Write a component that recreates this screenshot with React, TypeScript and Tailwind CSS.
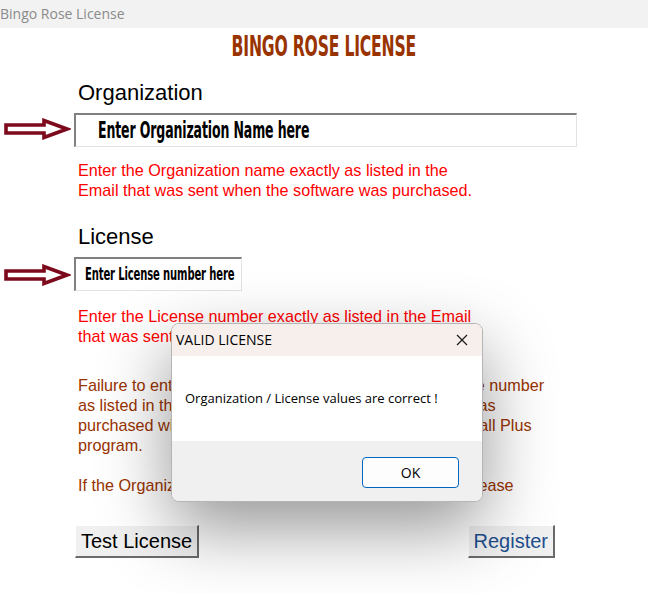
import React from "react";

function Arrow() {
  return (
    <svg width="68" height="22" viewBox="0 0 68 22" className="block">
      <polygon
        points="3,7 41,7 41,2.5 64,11 41,19.5 41,15 3,15"
        fill="#ffffff"
        stroke="#7d0a1c"
        strokeWidth="3.6"
        strokeLinejoin="miter"
      />
    </svg>
  );
}

export default function App() {
  return (
    <div className="relative w-[648px] h-[594px] overflow-hidden bg-white font-['Liberation_Sans',Arial,sans-serif]">
      {/* window title bar */}
      <div className="h-[28px] bg-[#f2f2f2] flex items-center">
        <span className="font-['Open_Sans','Noto_Sans',sans-serif] text-[14px] text-[#8a8a8a] leading-none">
          Bingo Rose License
        </span>
      </div>

      {/* heading */}
      <div className="flex justify-center pt-[4px] h-[52px]">
        <span className="inline-block whitespace-nowrap font-['DejaVu_Sans_Condensed','DejaVu_Sans',sans-serif] font-bold text-[28px] leading-[29px] text-[#993300] scale-x-[0.62] tracking-[-0.3px]">
          BINGO ROSE LICENSE
        </span>
      </div>

      <div className="pl-[78px]">
        <div className="text-[22px] leading-[25px] text-black">Organization</div>
        <div className="relative mt-[8px] -ml-[4px] w-[503px] h-[34px] border-t-2 border-l-2 border-t-[#808080] border-l-[#808080] border-b border-r border-b-[#e3e3e3] border-r-[#e3e3e3] flex items-center pl-[22px]">
          <span className="inline-block origin-left whitespace-nowrap font-['DejaVu_Sans_Condensed','DejaVu_Sans',sans-serif] font-bold text-[23px] text-black scale-x-[0.605] tracking-[-0.2px]">
            Enter Organization Name here
          </span>
          <div className="absolute left-[-73px] top-[3px]">
            <Arrow />
          </div>
        </div>
        <div className="mt-[13px] text-[16.2px] leading-[20px] text-[#ff0000]">
          Enter the Organization name exactly as listed in the
          <br />
          Email that was sent when the software was purchased.
        </div>

        <div className="mt-[24px] text-[22px] leading-[25px] text-black">License</div>
        <div className="relative mt-[8px] -ml-[4px] w-[168px] h-[34px] border-t-2 border-l-2 border-t-[#808080] border-l-[#808080] border-b border-r border-b-[#e3e3e3] border-r-[#e3e3e3] flex items-center pl-[9px]">
          <span className="inline-block origin-left whitespace-nowrap font-['DejaVu_Sans_Condensed','DejaVu_Sans',sans-serif] font-bold text-[17px] text-black scale-x-[0.655] tracking-[-0.2px]">
            Enter License number here
          </span>
          <div className="absolute left-[-73px] top-[5px]">
            <Arrow />
          </div>
        </div>
        <div className="mt-[15px] text-[16.2px] leading-[20px] text-[#ff0000]">
          Enter the License number exactly as listed in the Email
          <br />
          that was sent when the software was purchased.
        </div>

        <div className="mt-[29px] h-[123px] overflow-hidden text-[16.2px] leading-[20px] text-[#993300] whitespace-nowrap">
          Failure to enter the valid Organization name and License number
          <br />
          as listed in the Email that was sent when the software was
          <br />
          purchased will result in the inability to utilize the Bingo Ball Plus
          <br />
          program.
          <br />
          <br />
          If the Organization name or License number was lost, please
          <br />
          contact the vendor for a copy of the Email.
        </div>

        <div className="mt-[27px] flex justify-between w-[480px] -ml-[3px]">
          <button className="h-[33px] px-[5px] bg-[#f0f0f0] border-t border-l border-t-[#ffffff] border-l-[#ffffff] border-b-2 border-r-2 border-b-[#6b6b6b] border-r-[#6b6b6b] text-[20px] leading-none text-black">
            Test License
          </button>
          <button className="h-[33px] px-[5px] bg-[#f0f0f0] border-t border-l border-t-[#ffffff] border-l-[#ffffff] border-b-2 border-r-2 border-b-[#6b6b6b] border-r-[#6b6b6b] text-[20px] leading-none text-[#1e4f8f]">
            Register
          </button>
        </div>
      </div>

      {/* dialog */}
      <div className="absolute left-[171px] top-[323px] w-[312px] h-[179px] rounded-[8px] border border-[#b5b5b5] overflow-hidden shadow-[0_26px_70px_rgba(0,0,0,0.42)] bg-white flex flex-col font-['Open_Sans','Noto_Sans',sans-serif]">
        <div className="h-[32px] bg-[#f7efec] flex items-center justify-between pl-[4px] pr-[14px]">
          <span className="text-[14px] text-black leading-none">VALID LICENSE</span>
          <svg width="12" height="12" viewBox="0 0 12 12">
            <path d="M1 1L11 11M11 1L1 11" stroke="#1a1a1a" strokeWidth="1.2" />
          </svg>
        </div>
        <div className="h-[85px] bg-white flex items-center pl-[13px]">
          <span className="text-[13px] text-black leading-none">
            Organization / License values are correct !
          </span>
        </div>
        <div className="flex-1 bg-[#f0f0f0] flex items-start justify-end pr-[23px] pt-[16px]">
          <button className="w-[97px] h-[31px] rounded-[4px] border border-[#0067c0] bg-[#fdfdfd] text-[14px] text-black leading-none">
            OK
          </button>
        </div>
      </div>
    </div>
  );
}
